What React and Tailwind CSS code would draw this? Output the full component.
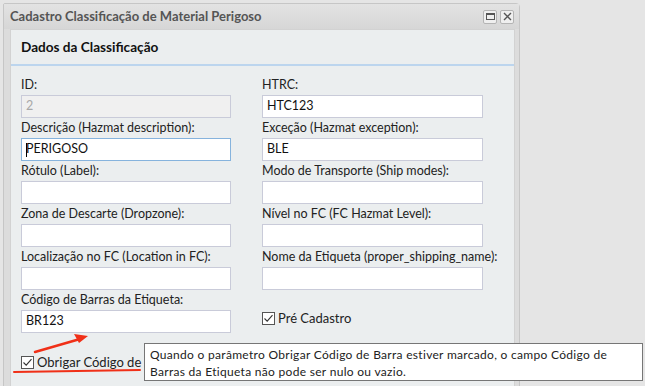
import React from "react";

const font = { fontFamily: '"Lato", "Open Sans", sans-serif' };

function Field({ label, value = "", focused = false, disabled = false, w = "w-[210px]" }) {
  return (
    <div className="flex flex-col">
      <div className="h-[20px] leading-[20px] text-[12.5px] text-[#222] whitespace-nowrap">{label}</div>
      <div
        className={`${w} h-[23px] border flex items-center px-[4px] text-[12.5px] ${
          focused ? "border-[#86b3dd]" : "border-[#c9cbd9]"
        } ${disabled ? "bg-[#f0f0f0] text-[#a8a8a8]" : "bg-white text-[#111]"}`}
      >
        {focused && <span className="w-px h-[14px] bg-black mr-[-1px]" />}
        {value}
      </div>
    </div>
  );
}

function Check({ label }) {
  return (
    <div className="flex items-center gap-[3px] text-[13px] text-[#222] whitespace-nowrap">
      <svg width="13" height="13" viewBox="0 0 13 13">
        <rect x="0.5" y="0.5" width="12" height="12" fill="#fff" stroke="#555" />
        <path d="M2.5 6.5 L5.2 9.2 L10.5 3.2" fill="none" stroke="#333" strokeWidth="1.1" />
      </svg>
      <span>{label}</span>
    </div>
  );
}

export default function App() {
  return (
    <div className="w-[645px] h-[386px] bg-[#e5e5e5] overflow-hidden relative" style={font}>
      <div className="ml-[3px] mt-[3px] w-[517px] h-[400px] bg-[#dcdcdc] border border-[#c6c6c6] rounded-tr-[4px] rounded-tl-[2px] flex flex-col">
        <div className="h-[25px] flex items-center pl-[6px] pr-[5px] bg-gradient-to-b from-[#e3e3e3] to-[#d6d6d6]">
          <div className="text-[13px] font-bold text-[#555] flex-1 pt-[1px]">
            Cadastro Classificação de Material Perigoso
          </div>
          <div className="flex gap-[3px]">
            <div className="w-[14px] h-[14px] border border-[#b4b4b4] rounded-[2px] bg-[#efefef] flex items-center justify-center">
              <div className="w-[9px] h-[7px] border border-[#555] border-t-[2px]" />
            </div>
            <div className="w-[14px] h-[14px] border border-[#b4b4b4] rounded-[2px] bg-[#efefef] flex items-center justify-center">
              <svg width="9" height="9" viewBox="0 0 9 9">
                <path d="M1 1 L8 8 M8 1 L1 8" stroke="#555" strokeWidth="1.4" />
              </svg>
            </div>
          </div>
        </div>
        <div className="ml-[6px] w-[505px] flex-1 bg-[#ebeeef] border border-[#d2d2d2]">
          <div className="h-[36px] border-b-2 border-[#bcd5ee] flex items-center pl-[10px]">
            <span className="text-[13.6px] font-bold text-[#111]">Dados da Classificação</span>
          </div>
          <div className="pl-[10px] pt-[9px] flex gap-[31px]">
            <div className="flex flex-col">
              <Field label="ID:" value="2" disabled />
              <Field label="Descrição (Hazmat description):" value="PERIGOSO" focused />
              <Field label="Rótulo (Label):" />
              <Field label="Zona de Descarte (Dropzone):" />
              <Field label="Localização no FC (Location in FC):" />
              <Field label="Código de Barras da Etiqueta:" value="BR123" />
              <div className="mt-[20px]">
                <Check label="Obrigar Código de Barra" />
              </div>
            </div>
            <div className="flex flex-col">
              <Field label="HTRC:" value="HTC123" w="w-[221px]" />
              <Field label="Exceção (Hazmat exception):" value="BLE" w="w-[221px]" />
              <Field label="Modo de Transporte (Ship modes):" w="w-[221px]" />
              <Field label="Nível no FC (FC Hazmat Level):" w="w-[221px]" />
              <Field label="Nome da Etiqueta (proper_shipping_name):" w="w-[221px]" />
              <div className="mt-[19px]">
                <Check label="Pré Cadastro" />
              </div>
            </div>
          </div>
        </div>
      </div>

      <svg className="absolute left-0 top-0" width="645" height="386">
        <path d="M35 352 L80 339" stroke="#f03018" strokeWidth="2.5" strokeLinecap="round" />
        <path d="M88 336 L74 334 L79 343 Z" fill="#f03018" />
        <path d="M14 372 Q80 371 140 370" stroke="#f03018" strokeWidth="2" fill="none" strokeLinecap="round" />
      </svg>

      <div className="absolute left-[144px] top-[343px] w-[499px] h-[38px] bg-white border border-[#767676] px-[5px] py-[2px] text-[12px] tracking-[0.3px] leading-[17px] text-[#222] whitespace-nowrap">
        Quando o parâmetro Obrigar Código de Barra estiver marcado, o campo Código de
        <br />
        Barras da Etiqueta não pode ser nulo ou vazio.
      </div>
    </div>
  );
}
